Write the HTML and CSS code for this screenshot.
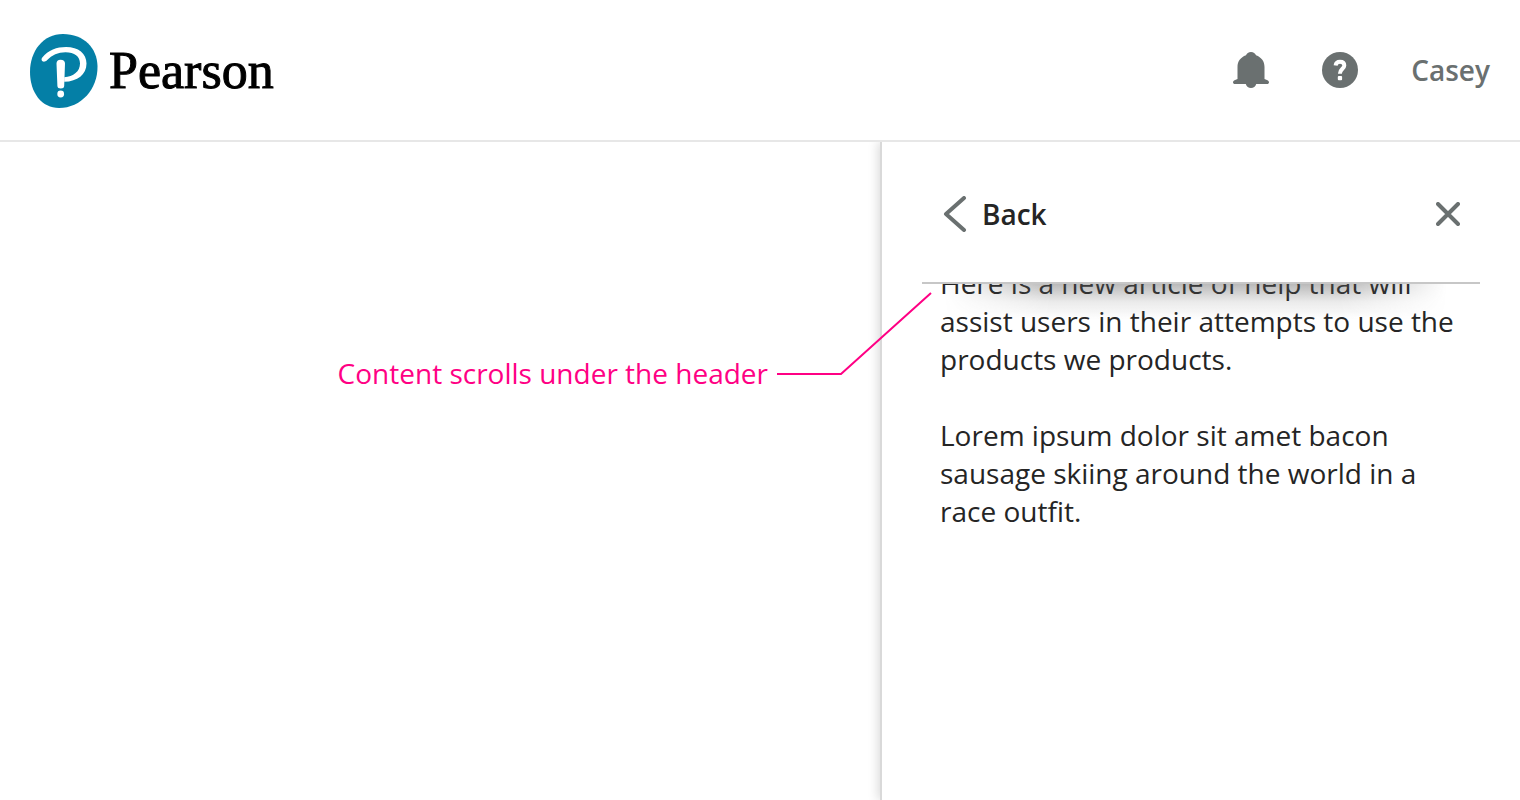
FILE: index.html
```html
<!DOCTYPE html>
<html lang="en">
<head>
<meta charset="utf-8">
<title>Pearson Help</title>
<link rel="stylesheet" href="styles.css">
</head>
<body>
<header class="topbar">
  <a class="brand" href="#">
    <svg class="brand-mark" viewBox="0 0 68 74" aria-hidden="true">
      <path fill="#047fa6" d="M33 0C54 0 67 14 67.500 32C68 55 51 74 29 74C12 74 0 59 0 38C0 17 13 0 33 0Z"/>
      <path fill="#fff" d="M12.300 23.500C18 16 27 13 36 13C48.500 13 56.500 19.500 56.500 29.500C56.500 40.500 47.500 47.500 34.200 47.800V43.300C43.500 42.500 50 37.500 50 29.500C50 22.500 44.500 18.300 35.500 18.300C28 18.300 22 21 17 26.300C13.500 29.500 10 26.500 12.300 23.500Z"/>
      <path fill="#fff" d="M26.500 29.500Q26.500 26 30.500 25.800Q35 26 35 29.500L34.200 52Q34 54.500 30.800 54.500Q27.500 54.500 27.400 52Z"/>
      <circle cx="30.700" cy="60" r="3.400" fill="#fff"/>
    </svg>
    <span class="brand-name">Pearson</span>
  </a>
  <nav class="tools">
    <button class="icon-button" aria-label="Notifications">
      <svg class="icon" viewBox="0 0 36 36" aria-hidden="true"><path fill="#6a7070" d="M18 0C20.500 0 22.200 1.300 23 3.300C28.500 5.300 31.500 9.500 31.500 15V27L34.500 28.200C36.800 29.200 36.300 32 34 32H23.200C22.500 34.500 20.500 36 18 36S13.500 34.500 12.800 32H2C-.3 32-.8 29.200 1.500 28.200L4.500 27V15C4.500 9.500 7.500 5.300 13 3.300C13.800 1.300 15.500 0 18 0Z"/></svg>
    </button>
    <button class="icon-button" aria-label="Help">
      <svg class="icon" viewBox="0 0 36 36" aria-hidden="true"><circle cx="18" cy="18" r="18" fill="#6a7070"/><path d="M13.600 13.600C13.900 11.200 15.500 9.800 18 9.800C20.700 9.800 22.300 11.300 22.300 13.500C22.300 16.800 17.900 17 17.900 21.800" fill="none" stroke="#fff" stroke-width="4"/><rect x="15.800" y="24" width="4.300" height="4.200" rx="1" fill="#fff"/></svg>
    </button>
    <a class="user" href="#">Casey</a>
  </nav>
</header>
<div class="workspace">
  <main class="stage">
    <p class="note">Content scrolls under the header
      <svg class="leader" viewBox="0 0 156 84" aria-hidden="true"><path d="M1 82H65L155 1" fill="none" stroke="#ff0084" stroke-width="2"/></svg>
    </p>
  </main>
  <aside class="panel">
    <div class="panel-header">
      <button class="back">
        <svg class="chevron" viewBox="0 0 24 36" aria-hidden="true"><path d="M21 2L3 18L21 34" fill="none" stroke="#6a7070" stroke-width="4" stroke-linecap="round" stroke-linejoin="round"/></svg>
        Back
      </button>
      <button class="close" aria-label="Close">
        <svg class="cross" viewBox="0 0 24 24" aria-hidden="true"><path d="M2 2L22 22M22 2L2 22" stroke="#6a7070" stroke-width="4" stroke-linecap="round"/></svg>
      </button>
    </div>
    <div class="article">
      <p>Here is a new article of help that will assist users in their attempts to use the products we products.</p>
      <p>Lorem ipsum dolor sit amet bacon sausage skiing around the world in a race outfit.</p>
    </div>
  </aside>
</div>
</body>
</html>
```
FILE: styles.css
```css
* { box-sizing: border-box; }

body {
  margin: 0;
  min-height: 100vh;
  display: flex;
  flex-direction: column;
  background: #fff;
  color: #252525;
  font: 28px/38px "Open Sans", "Noto Sans", sans-serif;
}

button {
  border: 0;
  padding: 0;
  background: none;
  color: inherit;
  font: inherit;
  cursor: pointer;
}

svg { display: block; flex: none; }
p { margin: 0; }
a { text-decoration: none; }

.topbar {
  display: flex;
  align-items: center;
  justify-content: space-between;
  padding: 34px 30px 32px;
  border-bottom: 2px solid #e7e7e7;
}

.brand {
  display: flex;
  align-items: center;
  gap: 11px;
  color: #000;
}

.brand-mark { width: 68px; height: 74px; }

.brand-name {
  font: 52px/64px "Liberation Serif", serif;
  -webkit-text-stroke: 1px #000;
}

.tools {
  display: flex;
  align-items: center;
  gap: 53px;
  padding-bottom: 3px;
}

.icon { width: 36px; height: 36px; }

.user {
  color: #6a7070;
  font-weight: 600;
}

.workspace {
  flex: 1;
  display: flex;
}

.stage {
  flex: 1;
  display: flex;
  justify-content: flex-end;
  align-items: flex-start;
  padding: 212px 112px 0 0;
}

.note {
  position: relative;
  z-index: 2;
  color: #ff0084;
}

.leader {
  position: absolute;
  left: 100%;
  bottom: 16px;
  width: 156px;
  height: 84px;
  margin-left: 8px;
}

.panel {
  width: 640px;
  padding: 0 40px;
  border-left: 2px solid #d9d9d9;
  background: #fff;
  box-shadow: -2px 0 10px rgba(0, 0, 0, .15);
  clip-path: inset(0 0 0 -20px);
}

.panel-header {
  position: relative;
  z-index: 1;
  display: flex;
  align-items: center;
  justify-content: space-between;
  padding: 53px 20px 49px 21px;
  border-bottom: 2px solid #c7c7c7;
  background: #fff;
}

.panel-header::after {
  content: "";
  position: absolute;
  top: calc(100% + 2px);
  left: 0;
  right: 0;
  height: 36px;
  background: linear-gradient(rgba(90, 90, 90, .42), rgba(90, 90, 90, .12) 50%, rgba(90, 90, 90, 0));
  mask-image: linear-gradient(to right, transparent 4%, #000 23%, #000 75%, transparent 94%);
}

.back {
  display: flex;
  align-items: center;
  gap: 15px;
  font-weight: 600;
}

.chevron { width: 24px; height: 36px; }
.cross { width: 24px; height: 24px; }

.article {
  display: grid;
  gap: 38px;
  margin-top: -20px;
  padding: 0 18px;
}
```
